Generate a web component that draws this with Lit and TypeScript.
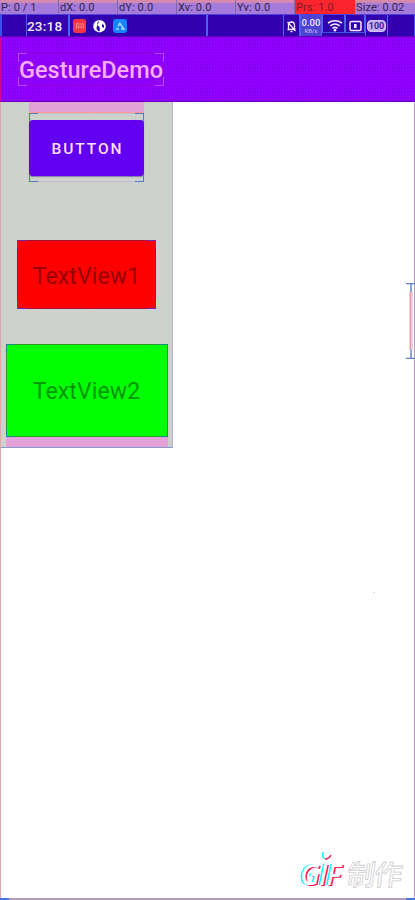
import { LitElement, html, css } from "lit";
import { customElement } from "lit/decorators.js";

const metrics = ["P: 0 / 1", "dX: 0.0", "dY: 0.0", "Xv: 0.0", "Yv: 0.0", "Prs: 1.0", "Size: 0.02"];

@customElement("pointer-bar")
class PointerBar extends LitElement {
  static styles = css`
    :host { display: grid; grid-template-columns: 59px 59px 59px 59px 59px 60px 60px; height: 14px;
      font: 11px/15px Roboto, sans-serif; color: #332453; }
    .cell { box-sizing: border-box; padding-left: 1px; white-space: nowrap; overflow: hidden;
      background: linear-gradient(#d48bae 0 2px, #a47ada 4px); border-right: 1px solid #8068b0; letter-spacing: 0.1px; }
    .hot { background: #fb252d; color: #85142b; border: 0; }
    .cell:last-child { border: 0; }
  `;
  render() {
    return metrics.map((m, i) => html`<div class="cell ${i === 5 ? "hot" : ""}">${m}</div>`);
  }
}

@customElement("status-bar")
class StatusBar extends LitElement {
  static styles = css`
    :host { display: flex; height: 23px; box-sizing: border-box; background: #3100af; border-top: 1px solid #4e42dc;
      border-bottom: 1px solid #6000b5; color: #f5e6ff; font-family: Roboto, sans-serif; }
    .pad { width: 26px; box-sizing: border-box; border-left: 2px solid #3b50ec; }
    .clock { width: 44px; box-sizing: border-box; border-left: 1px solid #4f5bf0; border-right: 2px solid #4c65f4;
      font-size: 13.5px; line-height: 23px; font-weight: 500; white-space: nowrap; letter-spacing: 0.2px; }
    .apps { width: 136px; border-right: 2px solid #4c62f0; }
    .grow { flex: 1; }
    .box { box-sizing: border-box; border: 1px solid #5260eb; border-top: 0; border-bottom: 0; height: 21px; }
    .lined { border-bottom: 1px solid #4355dd; height: 18px; }
    .rate { width: 22px; background: #4d43d2; text-align: center; font-size: 9.5px; line-height: 11px; padding-top: 2px; font-weight: 500; overflow: hidden; }
    .unit { font-size: 6px; line-height: 6px; color: #bba8f4; }
    .battery { width: 23px; padding: 5px 1px 4px; }
    .charge { height: 12px; box-sizing: border-box; border: 1px solid #d5c7fb; border-radius: 4px; background: #c2aff2;
      color: #432396; font-size: 9px; line-height: 10px; font-weight: 700; text-align: center; }
    .end { width: 27px; box-sizing: border-box; border-right: 1px solid #4157ed; }
    svg { display: block; }
  `;
  render() {
    return html`
      <div class="pad"></div><div class="clock">23:18</div>
      <div class="apps"><svg width="60" height="21" viewBox="0 0 60 21">
        <rect x="3" y="4" width="13" height="14" rx="3" fill="#fb344a"/>
        <path d="M6.5 13.5V9h7v4.5M8.5 13.5v-2h3v2" fill="none" stroke="#ff8797" stroke-width="1.2"/>
        <circle cx="29.5" cy="11.2" r="6.2" fill="#fff"/>
        <path d="M29.5 5.5q-4 3-1 5.5q2 1 1 5.5q-3-1-3-4" fill="#3100af"/>
        <path d="M32 9l2 1v3l-2-1z" fill="#3100af"/>
        <rect x="43" y="4" width="14" height="14" rx="3" fill="#1683ff"/>
        <path d="M50 7.5l-2 4M46 14h3M50 8.5l4 5.5h-3" fill="none" stroke="#a9dcff" stroke-width="1.4"/>
      </svg></div>
      <div class="grow"></div>
      <div class="box"><svg width="15" height="21" viewBox="0 0 15 21">
        <path d="M3.5 14.5h8M4.5 14V10a3 3 0 0 1 6 0V14M7.5 6v1M6.5 16.7h2M3.5 7l8 9" fill="none" stroke="#f5eaff" stroke-width="1.3"/>
      </svg></div>
      <div class="box rate">0.00<div class="unit">KB/s</div></div>
      <div class="box lined"><svg width="21" height="21" viewBox="0 0 21 21">
        <g fill="none" stroke="#f7ebff" stroke-width="1.6"><path d="M5 8q7-4.6 14 0"/><path d="M7.3 10.8q4.7-3.6 9.4 0"/><path d="M9.5 13.4q2.5-2 5 0"/></g>
        <circle cx="12" cy="15.2" r="1.3" fill="#fff"/>
      </svg></div>
      <div class="box lined"><svg width="18" height="21" viewBox="0 0 18 21">
        <rect x="4" y="6.5" width="11" height="9" rx="1.5" fill="none" stroke="#f7ebff" stroke-width="1.5"/>
        <path d="M8 9h2.6v4H8z" fill="#f7ebff"/>
      </svg></div>
      <div class="box battery"><div class="charge">100</div></div>
      <div class="end"></div>`;
  }
}

@customElement("app-root")
class AppRoot extends LitElement {
  static styles = css`
    :host { display: flex; flex-direction: column; position: relative; width: 415px; height: 900px; overflow: hidden;
      background: #fff; font-family: Roboto, sans-serif; }
    .toolbar { height: 65px; flex: none; box-sizing: border-box; padding: 16px 17px; border-left: 1px solid #d80093;
      background: conic-gradient(#8200ee 25%, #9200ff 0) 0 0 / 3px 3px; border-bottom: 1px solid #6c00bd; }
    .bounds { --c: #5279c8; --m: transparent; --f: transparent; box-sizing: border-box; flex: none;
      --l: linear-gradient(var(--c), var(--c)); --e: linear-gradient(var(--m), var(--m));
      background:
        var(--l) 0 0 / 9px 1px, var(--l) 0 0 / 1px 9px,
        var(--l) 100% 0 / 9px 1px, var(--l) 100% 0 / 1px 9px,
        var(--l) 0 100% / 9px 1px, var(--l) 0 100% / 1px 9px,
        var(--l) 100% 100% / 9px 1px, var(--l) 100% 100% / 1px 9px,
        var(--e) 0 0 / 100% 1px, var(--e) 0 100% / 100% 1px,
        var(--e) 0 0 / 1px 100%, var(--e) 100% 0 / 1px 100%;
      background-repeat: no-repeat; background-color: var(--f); }
    .bounds.title { --c: #b54cf8; --m: #9600d8; width: 146px; height: 33px; color: #fbaef8; font-size: 23.5px; line-height: 35px;
      font-weight: 500; white-space: nowrap; padding-left: 1px; }
    .panel { width: 173px; height: 346px; flex: none; box-sizing: border-box; display: flex; flex-direction: column; align-items: center;
      background: radial-gradient(circle, #dfced7 0.7px, transparent 0.8px) 0 0 / 7px 5px, #ccd2cb;
      border: 1px solid #b9add2; border-left-color: #e9a5b8; border-top: 0; border-bottom-color: #8799c8; }
    .margin { flex: none; background: conic-gradient(#d5a3dc 25%, #e7a1d5 0) 0 0 / 2px 2px; }
    .top { width: 115px; height: 10px; border-bottom: 1px solid #ff9b94; }
    .bounds.button-box { width: 115px; height: 69px; padding: 7px 0 0; --m: #c6b9cf; }
    .button { height: 56px; border-radius: 4px; background: #6200f1; color: #ffdfff; font-size: 15.5px;
      font-weight: 500; line-height: 58px; text-align: center; letter-spacing: 1.9px; text-indent: 2px; box-shadow: 0 1px 1px #8379a5; }
    .tv { text-align: center; font-size: 23px; white-space: nowrap; letter-spacing: 0.15px; }
    .bounds.one { width: 139px; height: 69px; margin-top: 58px; --m: #ad0e39; --c: #6630bd; --f: #f00; color: #960000; line-height: 73px; }
    .bounds.two { width: 162px; height: 93px; margin-top: 35px; --m: #329b28; --c: #168c8c; --f: #0f0; color: #009600; line-height: 96px; }
    .bottom { width: 162px; height: 10px; }
    .frame { position: absolute; left: 0; top: 102px; width: 415px; height: 798px; box-sizing: border-box;
      border: 1px solid #dba9ad; border-top: 0; border-right-color: #b99bc5; border-bottom: 2px solid #b29abb; }
    .corner { position: absolute; bottom: 0; width: 9px; height: 2px; background: #4a75dd; }
    .left { left: 0; } .right { right: 0; }
    .handle { position: absolute; left: 406px; top: 283px; width: 9px; height: 76px; }
    .speck { position: absolute; left: 373px; top: 592px; width: 2px; height: 1px; background: #ddd; }
    .mark { position: absolute; left: 298px; top: 849px; }
    .gif { font: italic 600 29px "Open Sans", sans-serif; text-shadow: -1.5px -0.5px 0 #00f5ff, 1.5px 0.5px 0 #ff164f; }
    .cn { font: 500 28px "Noto Sans CJK SC", sans-serif; }
  `;
  render() {
    return html`
      <pointer-bar></pointer-bar>
      <status-bar></status-bar>
      <div class="toolbar"><div class="bounds title">GestureDemo</div></div>
      <div class="panel">
        <div class="margin top"></div>
        <div class="bounds button-box"><div class="button">BUTTON</div></div>
        <div class="bounds tv one">TextView1</div>
        <div class="bounds tv two">TextView2</div>
        <div class="margin bottom"></div>
      </div>
      <div class="frame"></div>
      <div class="corner left"></div><div class="corner right"></div>
      <svg class="handle" viewBox="0 0 9 76">
        <path d="M4.5 9v58" stroke="#e89baf" stroke-width="2"/><path d="M6.5 9v58" stroke="#e5cbe8"/>
        <path d="M0 .5h9M0 75.5h9M5 1v8M5 67v8" stroke="#6385c8" stroke-width="1.5"/>
      </svg>
      <div class="speck"></div>
      <svg class="mark" width="112" height="44" viewBox="0 0 112 44">
        <text class="gif" x="2" y="36" fill="#fff" textLength="41">GIF</text>
        <path d="M25.5 3q-2 5 1 6.5" fill="none" stroke="#00f5ff" stroke-width="1.5"/>
        <path d="M27 10q4 0 6-4" fill="none" stroke="#ff164f" stroke-width="1.5"/>
        <text class="cn" x="53" y="36" textLength="55" transform="skewX(-8)" fill="#fff" stroke="#cfcbcf" stroke-width="0.8">制作</text>
      </svg>`;
  }
}
